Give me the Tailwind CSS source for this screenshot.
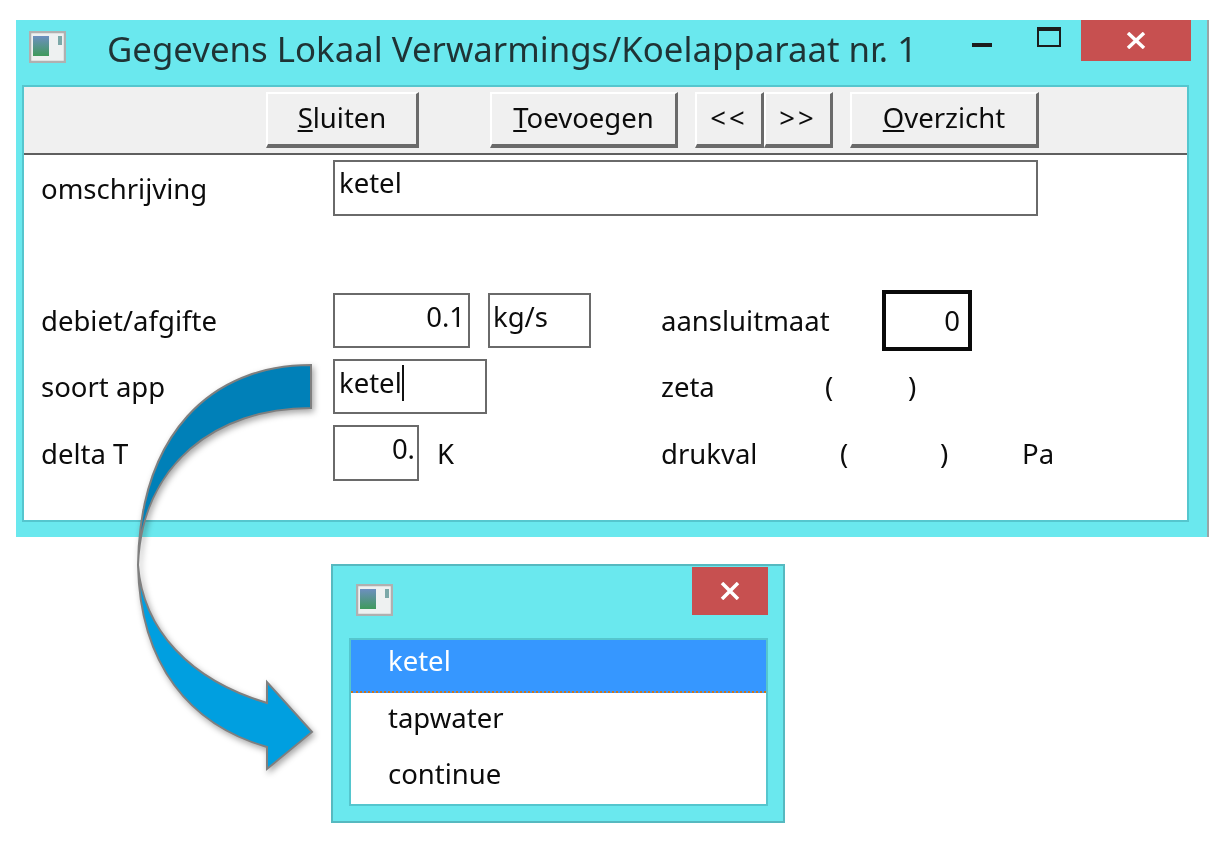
<!DOCTYPE html>
<html lang="nl">
<head>
  <meta charset="UTF-8">
  <meta name="viewport" content="width=device-width, initial-scale=1.0">
  <title>Gegevens Lokaal Verwarmings/Koelapparaat</title>
  <script src="https://cdn.jsdelivr.net/npm/@tailwindcss/browser@4"></script>
</head>
<body class="bg-white">
  <div class="relative w-[1228px] h-[853px] overflow-hidden blur-[0.5px] font-['Noto_Sans',sans-serif] text-[27.5px] leading-none text-[#0c0c0c]">

    <!-- Hoofdvenster -->
    <div class="absolute left-[16px] top-[20px] w-[1193px] h-[517px] bg-[#6ae8ee] border-r-2 border-[#9aa5a6] flex flex-col">
      <div class="h-[65px] flex items-start shrink-0">
        <svg class="ml-[13px] mt-[11px] w-[37px] h-[32px] shrink-0" viewBox="0 0 37 32">
          <defs>
            <linearGradient id="pane1" x1="0" y1="0" x2="0" y2="1">
              <stop offset="0" stop-color="#6d8fc0"/>
              <stop offset="1" stop-color="#3f9a5c"/>
            </linearGradient>
          </defs>
          <rect x="1" y="1" width="35" height="30" fill="#eef1f1" stroke="#b0b0b0" stroke-width="2.5"/>
          <rect x="4" y="5" width="16" height="20" fill="url(#pane1)"/>
          <rect x="29" y="5" width="4" height="9" fill="#7ba8a8"/>
        </svg>
        <span class="ml-[41px] mt-[11px] text-[34.8px] leading-[36px] text-[#1f3335] whitespace-nowrap">Gegevens Lokaal Verwarmings/Koelapparaat nr. 1</span>
        <div class="ml-auto flex items-start shrink-0">
          <span class="mt-[23px] w-[20px] h-[4px] bg-[#1c1c1c]"></span>
          <span class="ml-[45px] mt-[7px] w-[24px] h-[20px] border-2 border-t-4 border-[#1c1c1c]"></span>
          <span class="ml-[20px] mr-[16px] w-[110px] h-[41px] bg-[#c75050] flex items-center justify-center">
            <svg class="w-[20px] h-[17px]" viewBox="0 0 20 17"><path d="M2 1 L18 16 M18 1 L2 16" stroke="#fff" stroke-width="3.5" fill="none"/></svg>
          </span>
        </div>
      </div>

      <div class="ml-[6px] mr-[18px] h-[437px] border-2 border-[#55c6ce] bg-white flex flex-col">
        <!-- Knoppenbalk -->
        <div class="h-[68px] shrink-0 bg-[#f0f0f0] border-b-2 border-[#5f5f5f] pt-[5px] pl-[242px] flex items-start">
          <button class="w-[153px] h-[56px] pb-[3px] bg-[#f0f0f0] border-t-2 border-l-2 border-white border-r-[3px] border-b-[4px] border-r-[#6a6a6a] border-b-[#6a6a6a] text-center"><u>S</u>luiten</button>
          <button class="ml-[71px] w-[188px] h-[56px] pb-[3px] bg-[#f0f0f0] border-t-2 border-l-2 border-white border-r-[3px] border-b-[4px] border-r-[#6a6a6a] border-b-[#6a6a6a] text-center"><u>T</u>oevoegen</button>
          <button class="ml-[17px] w-[69px] h-[56px] pb-[3px] bg-[#f0f0f0] border-t-2 border-l-2 border-white border-r-[3px] border-b-[4px] border-r-[#6a6a6a] border-b-[#6a6a6a] text-center tracking-[3px]">&lt;&lt;</button>
          <button class="w-[69px] h-[56px] pb-[3px] bg-[#f0f0f0] border-t-2 border-l-2 border-white border-r-[3px] border-b-[4px] border-r-[#6a6a6a] border-b-[#6a6a6a] text-center tracking-[3px]">&gt;&gt;</button>
          <button class="ml-[17px] w-[189px] h-[56px] pb-[3px] bg-[#f0f0f0] border-t-2 border-l-2 border-white border-r-[3px] border-b-[4px] border-r-[#6a6a6a] border-b-[#6a6a6a] text-center"><u>O</u>verzicht</button>
        </div>

        <!-- Formulier -->
        <div class="pt-[5px] pl-[17px] flex flex-col">
          <div class="h-[56px] flex items-center">
            <span class="w-[292px] mt-[2px]">omschrijving</span>
            <div class="w-[705px] h-[56px] border-2 border-[#6a6a6a] pl-[4px] pt-[7px]">ketel</div>
          </div>
          <div class="mt-[77px] h-[55px] flex items-center">
            <span class="w-[292px] mt-[1px]">debiet/afgifte</span>
            <div class="w-[137px] h-[55px] border-2 border-[#6a6a6a] pr-[3px] pt-[8px] text-right">0.1</div>
            <div class="ml-[18px] w-[103px] h-[55px] border-2 border-[#6a6a6a] pl-[3px] pt-[8px]">kg/s</div>
            <span class="ml-[70px] w-[221px] mt-[1px]">aansluitmaat</span>
            <div class="w-[90px] h-[61px] border-4 border-[#0a0a0a] pr-[8px] pt-[13px] text-right">0</div>
          </div>
          <div class="mt-[11px] h-[55px] flex items-center">
            <span class="w-[292px] mt-[1px]">soort app</span>
            <div class="w-[154px] h-[55px] border-2 border-[#6a6a6a] pl-[4px] pt-[8px] flex items-start">ketel<span class="w-[2px] h-[36px] -mt-[4px] bg-[#111]"></span></div>
            <span class="ml-[174px] w-[164px] mt-[1px]">zeta</span>
            <span class="w-[83px] mt-[1px]">(</span>
            <span class="mt-[1px]">)</span>
          </div>
          <div class="mt-[11px] h-[56px] flex items-center">
            <span class="w-[292px] mt-[1px]">delta T</span>
            <div class="w-[86px] h-[56px] border-2 border-[#6a6a6a] pr-[2px] pt-[8px] text-right">0.</div>
            <span class="ml-[18px] w-[224px] mt-[1px]">K</span>
            <span class="w-[179px] mt-[1px]">drukval</span>
            <span class="w-[100px] mt-[1px]">(</span>
            <span class="w-[82px] mt-[1px]">)</span>
            <span class="mt-[1px]">Pa</span>
          </div>
        </div>
      </div>
    </div>

    <!-- Keuzevenster -->
    <div class="absolute left-[331px] top-[564px] w-[454px] h-[259px] bg-[#6ae8ee] border-2 border-[#56b9c0] flex flex-col">
      <div class="h-[72px] shrink-0 flex items-start">
        <svg class="ml-[23px] mt-[18px] w-[37px] h-[32px] shrink-0" viewBox="0 0 37 32">
          <defs>
            <linearGradient id="pane2" x1="0" y1="0" x2="0" y2="1">
              <stop offset="0" stop-color="#6d8fc0"/>
              <stop offset="1" stop-color="#3f9a5c"/>
            </linearGradient>
          </defs>
          <rect x="1" y="1" width="35" height="30" fill="#eef1f1" stroke="#b0b0b0" stroke-width="2.5"/>
          <rect x="4" y="5" width="16" height="20" fill="url(#pane2)"/>
          <rect x="29" y="5" width="4" height="9" fill="#7ba8a8"/>
        </svg>
        <span class="ml-auto mr-[15px] mt-[1px] w-[76px] h-[48px] bg-[#c75050] flex items-center justify-center">
          <svg class="w-[20px] h-[18px]" viewBox="0 0 20 18"><path d="M2 1 L18 17 M18 1 L2 17" stroke="#fff" stroke-width="3.5" fill="none"/></svg>
        </span>
      </div>
      <div class="ml-[16px] mr-[15px] h-[168px] border-2 border-[#55c6ce] bg-white flex flex-col">
        <div class="h-[53px] bg-[#3697ff] border-b-2 border-dotted border-[#c9741f] text-white pl-[37px] pt-[7px]">ketel</div>
        <div class="h-[56px] pl-[37px] pt-[11px]">tapwater</div>
        <div class="h-[56px] pl-[37px] pt-[12px]">continue</div>
      </div>
    </div>

    <!-- Gebogen pijl -->
    <svg class="absolute left-0 top-0 w-[1228px] h-[853px] pointer-events-none drop-shadow-[2px_3px_3px_rgba(0,0,0,0.35)]" viewBox="0 0 1228 853">
      <path d="M138 565 C140 665 190 725 267 747 L267 769 L312 732 L267 682 L267 703 C190 680 143 630 138 565 Z" fill="#009fe0" stroke="#7f7f7f" stroke-width="2" stroke-linejoin="miter"/>
      <path d="M311 365 C210 365 140 435 138 565 C142 465 215 408 311 408 Z" fill="#0080b8" stroke="#7f7f7f" stroke-width="2"/>
    </svg>
  </div>
</body>
</html>
